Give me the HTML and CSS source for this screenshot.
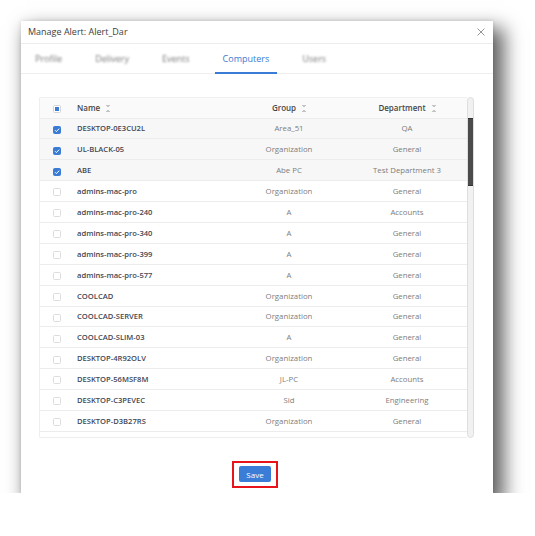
FILE: index.html
```html
<!DOCTYPE html>
<html>
<head>
<meta charset="utf-8">
<link rel="stylesheet" href="styles.css">
</head>
<body>
<div class="dialog">
  <div class="header">
    <span class="title">Manage Alert: Alert_Dar</span>
    <svg class="close" width="8" height="8" viewBox="0 0 8 8"><path d="M0.5 0.5L7.5 7.5M7.5 0.5L0.5 7.5" stroke="#8a8a8a" stroke-width="0.9" fill="none"/></svg>
  </div>
  <div class="tabs">
    <div class="tab dim">Profile</div>
    <div class="tab dim">Delivery</div>
    <div class="tab dim">Events</div>
    <div class="tab active">Computers</div>
    <div class="tab dim">Users</div>
  </div>
  <div class="content">
    <div class="grid-wrap">
      <div class="table-clip">
        <table class="grid">
          <colgroup><col class="c-check"><col class="c-name"><col class="c-group"><col class="c-dept"></colgroup>
          <thead>
            <tr>
              <th class="chk"><span class="box partial"><span class="dot"></span></span></th>
              <th class="name">Name<span class="sort"></span></th>
              <th class="mid">Group<span class="sort"></span></th>
              <th class="mid">Department<span class="sort"></span></th>
            </tr>
          </thead>
          <tbody>
            <tr class="sel"><td class="chk"><span class="box on"><svg width="8" height="8" viewBox="0 0 8 8"><path d="M2 4.2L3.4 5.6L6.2 2.6" stroke="#fff" stroke-width="1" fill="none"/></svg></span></td><td class="name">DESKTOP-0E3CU2L</td><td class="mid">Area_51</td><td class="mid">QA</td></tr>
            <tr class="sel"><td class="chk"><span class="box on"><svg width="8" height="8" viewBox="0 0 8 8"><path d="M2 4.2L3.4 5.6L6.2 2.6" stroke="#fff" stroke-width="1" fill="none"/></svg></span></td><td class="name">UL-BLACK-05</td><td class="mid">Organization</td><td class="mid">General</td></tr>
            <tr class="sel"><td class="chk"><span class="box on"><svg width="8" height="8" viewBox="0 0 8 8"><path d="M2 4.2L3.4 5.6L6.2 2.6" stroke="#fff" stroke-width="1" fill="none"/></svg></span></td><td class="name">ABE</td><td class="mid">Abe PC</td><td class="mid">Test Department 3</td></tr>
            <tr><td class="chk"><span class="box"></span></td><td class="name">admins-mac-pro</td><td class="mid">Organization</td><td class="mid">General</td></tr>
            <tr><td class="chk"><span class="box"></span></td><td class="name">admins-mac-pro-240</td><td class="mid">A</td><td class="mid">Accounts</td></tr>
            <tr><td class="chk"><span class="box"></span></td><td class="name">admins-mac-pro-340</td><td class="mid">A</td><td class="mid">General</td></tr>
            <tr><td class="chk"><span class="box"></span></td><td class="name">admins-mac-pro-399</td><td class="mid">A</td><td class="mid">General</td></tr>
            <tr><td class="chk"><span class="box"></span></td><td class="name">admins-mac-pro-577</td><td class="mid">A</td><td class="mid">General</td></tr>
            <tr><td class="chk"><span class="box"></span></td><td class="name">COOLCAD</td><td class="mid">Organization</td><td class="mid">General</td></tr>
            <tr><td class="chk"><span class="box"></span></td><td class="name">COOLCAD-SERVER</td><td class="mid">Organization</td><td class="mid">General</td></tr>
            <tr><td class="chk"><span class="box"></span></td><td class="name">COOLCAD-SLIM-03</td><td class="mid">A</td><td class="mid">General</td></tr>
            <tr><td class="chk"><span class="box"></span></td><td class="name">DESKTOP-4R92OLV</td><td class="mid">Organization</td><td class="mid">General</td></tr>
            <tr><td class="chk"><span class="box"></span></td><td class="name">DESKTOP-56MSF8M</td><td class="mid">JL-PC</td><td class="mid">Accounts</td></tr>
            <tr><td class="chk"><span class="box"></span></td><td class="name">DESKTOP-C3PEVEC</td><td class="mid">Sid</td><td class="mid">Engineering</td></tr>
            <tr><td class="chk"><span class="box"></span></td><td class="name">DESKTOP-D3B27RS</td><td class="mid">Organization</td><td class="mid">General</td></tr>
            <tr><td class="chk"><span class="box"></span></td><td class="name">DESKTOP-E3SRHTN</td><td class="mid">Organization</td><td class="mid">General</td></tr>
          </tbody>
        </table>
      </div>
      <div class="scrollbar">
        <div class="cap"></div>
        <div class="thumb"></div>
        <div class="rest"></div>
      </div>
    </div>
  </div>
  <div class="footer">
    <div class="highlight"><button class="save">Save</button></div>
  </div>
</div>
</body>
</html>
```
FILE: styles.css
```css
* { box-sizing: border-box; }
html, body { margin: 0; padding: 0; background: #fff; }
body {
  font-family: "Open Sans", "Noto Sans", "DejaVu Sans", sans-serif;
  padding: 21px 0 0 21px;
}
.dialog {
  width: 472px;
  height: 472px;
  background: #fff;
  box-shadow: 8px 10px 18px 3px rgba(0,0,0,0.62), 0 0 4px rgba(0,0,0,0.12);
  display: flex;
  flex-direction: column;
}
.header {
  height: 23px;
  border-bottom: 1px solid #ececec;
  display: flex;
  align-items: center;
  justify-content: space-between;
  padding: 0 8px 1px 7px;
}
.title {
  font-size: 9px;
  color: #3d3d3d;
}
.close { display: block; }
.tabs {
  height: 30px;
  border-bottom: 1px solid #eeeeee;
  display: flex;
  align-items: stretch;
  gap: 17px;
  padding-left: 6px;
}
.tab {
  font-size: 9px;
  padding: 0 8px;
  display: flex;
  align-items: center;
  color: #8c8c8c;
  border-bottom: 2px solid transparent;
  margin-bottom: -1px;
}
.tab.dim { filter: blur(1.1px); color: #7a7a7a; }
.tab.active { color: #3a7bd5; border-bottom-color: #3a7bd5; }
.content {
  padding: 23px 19px 0 18px;
}
.grid-wrap {
  display: flex;
  height: 341px;
}
.table-clip {
  flex: 1;
  overflow: hidden;
  border-left: 1px solid #eeeeee;
  border-top: 1px solid #f0f0f0;
  border-bottom: 1px solid #eeeeee;
  border-radius: 2px 0 0 2px;
}
.grid {
  width: 100%;
  border-collapse: collapse;
  table-layout: fixed;
}
.c-check { width: 30px; }
.c-name { width: 161px; }
.c-group { width: 116px; }
.c-dept { width: 120px; }
.grid th, .grid td {
  height: 20.9px;
  padding: 0;
  border-bottom: 1px solid #ececec;
  white-space: nowrap;
  overflow: hidden;
}
.grid thead th {
  background: #fafafa;
  font-size: 8px;
  font-weight: 600;
  color: #474747;
  height: 20px;
}
.grid td { font-size: 8px; }
.grid tr.sel td { background: #f7f7f7; }
.chk { text-align: left; padding-left: 13px !important; }
.name { text-align: left; padding-left: 7px !important; }
.grid td.name { font-weight: 600; color: #424754; font-size: 7.6px; }
.mid { text-align: center; }
.grid td.mid { color: #7d7d7d; font-size: 7.8px; }
.box {
  display: inline-flex;
  align-items: center;
  justify-content: center;
  width: 8px;
  height: 8px;
  border: 1px solid #dcdcdc;
  border-radius: 1.5px;
  background: #fff;
  vertical-align: middle;
}
.box.on { background: #3a7bd5; border-color: #3a7bd5; }
.box.on svg { display: block; flex: none; }
.box.partial { border-color: #d5d5d5; }
.box .dot { width: 4px; height: 4px; background: #3a7bd5; }
.sort {
  display: inline-block;
  width: 4px;
  height: 7px;
  margin-left: 6px;
  vertical-align: middle;
  position: relative;
  top: -1px;
  background:
    linear-gradient(to top right, transparent 50%, #c4c4c4 50%) 0 0 / 2px 3px no-repeat,
    linear-gradient(to top left, transparent 50%, #c4c4c4 50%) 2px 0 / 2px 3px no-repeat,
    linear-gradient(to bottom right, transparent 50%, #c4c4c4 50%) 0 4px / 2px 3px no-repeat,
    linear-gradient(to bottom left, transparent 50%, #c4c4c4 50%) 2px 4px / 2px 3px no-repeat;
}
.scrollbar {
  width: 7px;
  display: flex;
  flex-direction: column;
  background: #f1f1f1;
  border: 1px solid #dedede;
  border-radius: 4px;
  overflow: hidden;
}
.cap { height: 20px; }
.thumb {
  height: 68px;
  background: #4b4b4b;
  border-top: 1px solid #333;
  border-bottom: 1px solid #333;
}
.rest { flex: 1; }
.footer {
  display: flex;
  justify-content: center;
  padding-top: 23px;
  padding-right: 4px;
}
.highlight {
  border: 2px solid #e8141c;
  padding: 3px 5px 4px 5px;
}
.save {
  display: block;
  width: 32px;
  height: 16px;
  border: none;
  border-radius: 2px;
  background: #3b7dd6;
  color: #fff;
  font-family: "Open Sans", "Noto Sans", sans-serif;
  font-size: 8px;
  padding: 0;
}
```
